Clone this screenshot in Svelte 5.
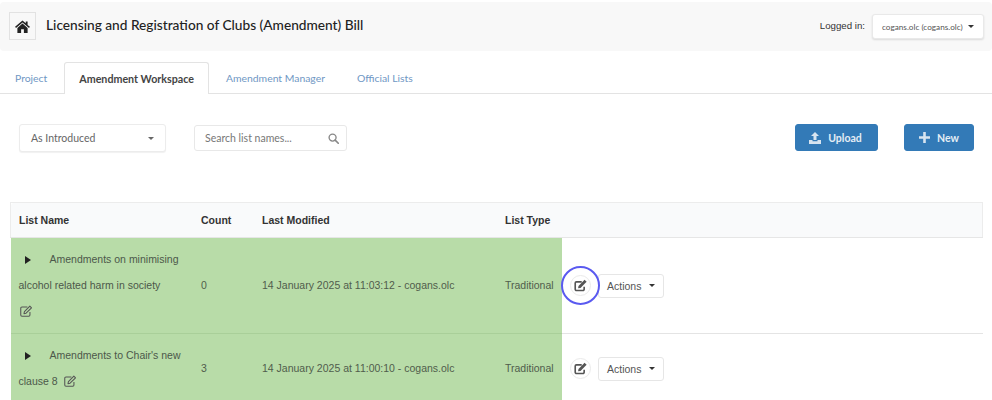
<script>
  const tabs = [
    { label: 'Project', active: false },
    { label: 'Amendment Workspace', active: true },
    { label: 'Amendment Manager', active: false },
    { label: 'Official Lists', active: false }
  ];

  const lists = [
    { name: 'Amendments on minimising alcohol related harm in society', count: 0, modified: '14 January 2025 at 11:03:12 - cogans.olc', ring: true },
    { name: "Amendments to Chair's new clause 8", count: 3, modified: '14 January 2025 at 11:00:10 - cogans.olc', ring: false }
  ];
</script>

{#snippet editIcon(size)}
  <svg class="edit" width={size} height={size} viewBox="0 0 16 16" aria-hidden="true">
    <path d="M12.5 9v3.6a1.4 1.4 0 0 1-1.4 1.4H3.4A1.4 1.4 0 0 1 2 12.6V4.9a1.4 1.4 0 0 1 1.4-1.4h6.2" fill="none" stroke="currentColor" stroke-width="1.2" />
    <path d="M6.2 8.6 12.4 2.4l1.9 1.9-6.2 6.2-2.4.5z" fill="none" stroke="currentColor" stroke-width="1.2" stroke-linejoin="round" />
  </svg>
{/snippet}

{#snippet solidEdit()}
  <svg width="13" height="13" viewBox="0 0 16 16" aria-hidden="true">
    <path d="M12.5 9.500v3.200a1.500 1.500 0 0 1-1.500 1.500H3a1.500 1.500 0 0 1-1.500-1.500V5A1.500 1.500 0 0 1 3 3.500h6.500" fill="none" stroke="#555" stroke-width="2" />
    <path d="M5.500 8.500 13 1l2.500 2.500L8 11l-3 .5z" fill="#555" />
  </svg>
{/snippet}

<div class="page">
  <header class="navbar">
    <div class="brand">
      <button class="home" aria-label="Home">
        <svg width="15" height="13" viewBox="0 0 16 14" aria-hidden="true">
          <path d="M8 .6 0 7.400l1 1.200L8 2.700l7 5.900 1-1.200-2.500-2.100V1.500h-2v2.100z" fill="#222" />
          <path d="M8 3.900 2.500 8.500V14h4V10h3v4h4V8.500z" fill="#222" />
        </svg>
      </button>
      <h1>Licensing and Registration of Clubs (Amendment) Bill</h1>
    </div>
    <div class="login">
      <span>Logged in:</span>
      <button class="user">cogans.olc (cogans.olc)<i class="caret dark"></i></button>
    </div>
  </header>

  <nav class="tabs">
    {#each tabs as tab}
      <a href="#top" class:active={tab.active}>{tab.label}</a>
    {/each}
  </nav>

  <section class="toolbar">
    <div class="filters">
      <button class="select">As Introduced<i class="caret"></i></button>
      <div class="search">
        <span>Search list names...</span>
        <svg width="11" height="11" viewBox="0 0 12 12" aria-hidden="true">
          <circle cx="5" cy="5" r="3.800" fill="none" stroke="#888" stroke-width="1.500" />
          <path d="m7.800 7.800 3.400 3.400" stroke="#888" stroke-width="1.800" stroke-linecap="round" />
        </svg>
      </div>
    </div>
    <div class="buttons">
      <button class="primary upload">
        <svg width="12" height="12" viewBox="0 0 12 12" aria-hidden="true">
          <path d="M6 0 2 4h2.500v4h3V4H10zM0 8h3.500v1.300h5V8H12v4H0z" fill="#d7e4f0" />
        </svg>
        Upload
      </button>
      <button class="primary new">
        <svg width="11" height="11" viewBox="0 0 11 11" aria-hidden="true">
          <path d="M4.200 0h2.600v4.200H11v2.600H6.800V11H4.200V6.800H0V4.200h4.200z" fill="#d7e4f0" />
        </svg>
        New
      </button>
    </div>
  </section>

  <table>
    <thead>
      <tr>
        <th class="c-name">List Name</th>
        <th class="c-count">Count</th>
        <th class="c-mod">Last Modified</th>
        <th class="c-type">List Type</th>
        <th></th>
      </tr>
    </thead>
    <tbody>
      {#each lists as list}
        <tr>
          <td class="green name">
            <i class="arrow"></i>{list.name}&nbsp; {@render editIcon(14)}
          </td>
          <td class="green">{list.count}</td>
          <td class="green">{list.modified}</td>
          <td class="green">Traditional</td>
          <td class="actions">
            <div class="row-actions">
              <span class="round" class:ring={list.ring}>{@render solidEdit()}</span>
              <button class="action-btn">Actions<i class="caret dark"></i></button>
            </div>
          </td>
        </tr>
      {/each}
    </tbody>
  </table>
</div>

<style>
  :global(body) {
    margin: 0;
    background: #fff;
  }

  .page {
    height: 400px;
    overflow: hidden;
    padding-top: 2px;
    box-sizing: border-box;
    font-family: Lato, sans-serif;
  }

  button {
    font-family: inherit;
    cursor: pointer;
  }

  .navbar {
    height: 49px;
    background: #f8f8f8;
    border-radius: 4px;
    display: flex;
    align-items: center;
    justify-content: space-between;
    padding: 0 8px 0 9px;
  }

  .brand {
    display: flex;
    align-items: center;
    gap: 10px;
    margin-top: -1px;
  }

  .home {
    width: 27px;
    height: 28px;
    padding: 0;
    background: #f8f8f8;
    border: 1px solid #e2e2e2;
    display: flex;
    align-items: center;
    justify-content: center;
  }

  h1 {
    margin: 0;
    font-size: 13.700px;
    font-weight: 500;
    color: #222;
    position: relative;
    top: -2px;
  }

  .login {
    display: flex;
    align-items: center;
    gap: 7px;
    font-family: "Liberation Sans", Arial, sans-serif;
    font-size: 9.700px;
    color: #333;
  }

  .login span {
    position: relative;
    top: -1px;
  }

  .user {
    width: 112px;
    height: 25px;
    padding: 0 9px;
    background: #fff;
    border: 1px solid #e9e9e9;
    border-radius: 3px;
    box-shadow: 0 1px 2px rgba(0, 0, 0, 0.12);
    font-family: Lato, sans-serif;
    font-size: 8.200px;
    color: #555;
    display: flex;
    align-items: center;
    justify-content: space-between;
    white-space: nowrap;
  }

  .caret {
    display: inline-block;
    flex: none;
    width: 0;
    height: 0;
    border-left: 3px solid transparent;
    border-right: 3px solid transparent;
    border-top: 3px solid #666;
  }

  .caret.dark {
    border-top-color: #333;
  }

  .tabs {
    margin-top: 11px;
    height: 31px;
    border-bottom: 1px solid #e3e3e3;
    display: flex;
    font-size: 10.400px;
  }

  .tabs a {
    padding: 0 14px;
    margin-right: 2px;
    line-height: 31px;
    height: 31px;
    color: #6f97c4;
    text-decoration: none;
    box-sizing: border-box;
    border: 1px solid transparent;
    border-bottom: none;
  }

  .tabs a.active {
    height: 32px;
    background: #fff;
    border-color: #e3e3e3;
    border-radius: 3px 3px 0 0;
    color: #444;
    font-size: 10.700px;
    font-weight: 700;
  }

  .toolbar {
    display: flex;
    justify-content: space-between;
    align-items: flex-start;
    padding: 30px 18px 0 19px;
    height: 108px;
    box-sizing: border-box;
  }

  .filters,
  .buttons {
    display: flex;
    align-items: center;
  }

  .filters {
    gap: 28px;
  }

  .buttons {
    gap: 26px;
  }

  .select {
    width: 147px;
    height: 28px;
    padding: 0 11px;
    background: #fff;
    border: 1px solid #ececec;
    border-radius: 3px;
    box-shadow: 0 1px 1px rgba(0, 0, 0, 0.06);
    font-size: 10.500px;
    color: #666;
    display: flex;
    align-items: center;
    justify-content: space-between;
  }

  .search {
    width: 153px;
    height: 26px;
    box-sizing: border-box;
    padding: 0 7px 0 10px;
    border: 1px solid #e8e8e8;
    border-radius: 3px;
    font-size: 10.500px;
    color: #777;
    display: flex;
    align-items: center;
    justify-content: space-between;
  }

  .primary {
    height: 27px;
    padding: 0;
    background: #337ab7;
    border: 1px solid #337ab7;
    border-radius: 3px;
    color: #e4edf5;
    font-size: 10.500px;
    font-weight: 700;
    display: flex;
    align-items: center;
    justify-content: center;
    gap: 7px;
  }

  .upload {
    width: 83px;
    padding-right: 2px;
  }

  .new {
    width: 70px;
  }

  table {
    width: 973px;
    margin-left: 10px;
    border-collapse: collapse;
    table-layout: fixed;
    font-family: "Liberation Sans", Arial, sans-serif;
    font-size: 10.500px;
    color: #555;
  }

  th {
    height: 34px;
    padding: 0 8px;
    background: #f9fafb;
    border-top: 1px solid #ececec;
    border-bottom: 1px solid #e6e6e6;
    text-align: left;
    font-weight: 700;
    color: #333;
    white-space: nowrap;
  }

  th:first-child {
    border-left: 1px solid #ececec;
    border-radius: 3px 0 0 0;
  }

  th:last-child {
    border-right: 1px solid #ececec;
  }

  .c-name {
    width: 166px;
  }

  .c-count {
    width: 45px;
  }

  .c-mod {
    width: 227px;
  }

  .c-type {
    width: 49px;
  }

  td {
    padding: 8px 8px 9px;
    line-height: 26px;
    border-bottom: 1px solid #e4e4e4;
    vertical-align: middle;
  }

  .green {
    background: #b8dca8;
    color: #505c4c;
    border-bottom-color: #a9cf99;
    white-space: nowrap;
  }

  .name {
    white-space: normal;
    color: #4c584a;
  }

  .arrow {
    display: inline-block;
    width: 0;
    height: 0;
    margin: 0 19px 0 6px;
    border-top: 4.500px solid transparent;
    border-bottom: 4.500px solid transparent;
    border-left: 6px solid #222;
    vertical-align: -1px;
  }

  .edit {
    color: #555;
    vertical-align: -3px;
    margin-right: 8px;
  }

  .actions {
    padding: 0 8px;
  }

  .row-actions {
    display: flex;
    align-items: center;
    gap: 7px;
  }

  .round {
    position: relative;
    width: 19px;
    height: 19px;
    border: 1px solid #eaeaea;
    border-radius: 50%;
    display: flex;
    align-items: center;
    justify-content: center;
  }

  .ring::after {
    content: "";
    position: absolute;
    left: -10px;
    top: -10px;
    width: 35px;
    height: 35px;
    border: 2px solid #5a5af0;
    border-radius: 50%;
  }

  .action-btn {
    width: 66px;
    height: 24px;
    padding: 0 8px;
    background: #fff;
    border: 1px solid #e6e6e6;
    border-radius: 3px;
    font-family: "Liberation Sans", Arial, sans-serif;
    font-size: 10.500px;
    color: #555;
    display: flex;
    align-items: center;
    justify-content: space-between;
  }
</style>
